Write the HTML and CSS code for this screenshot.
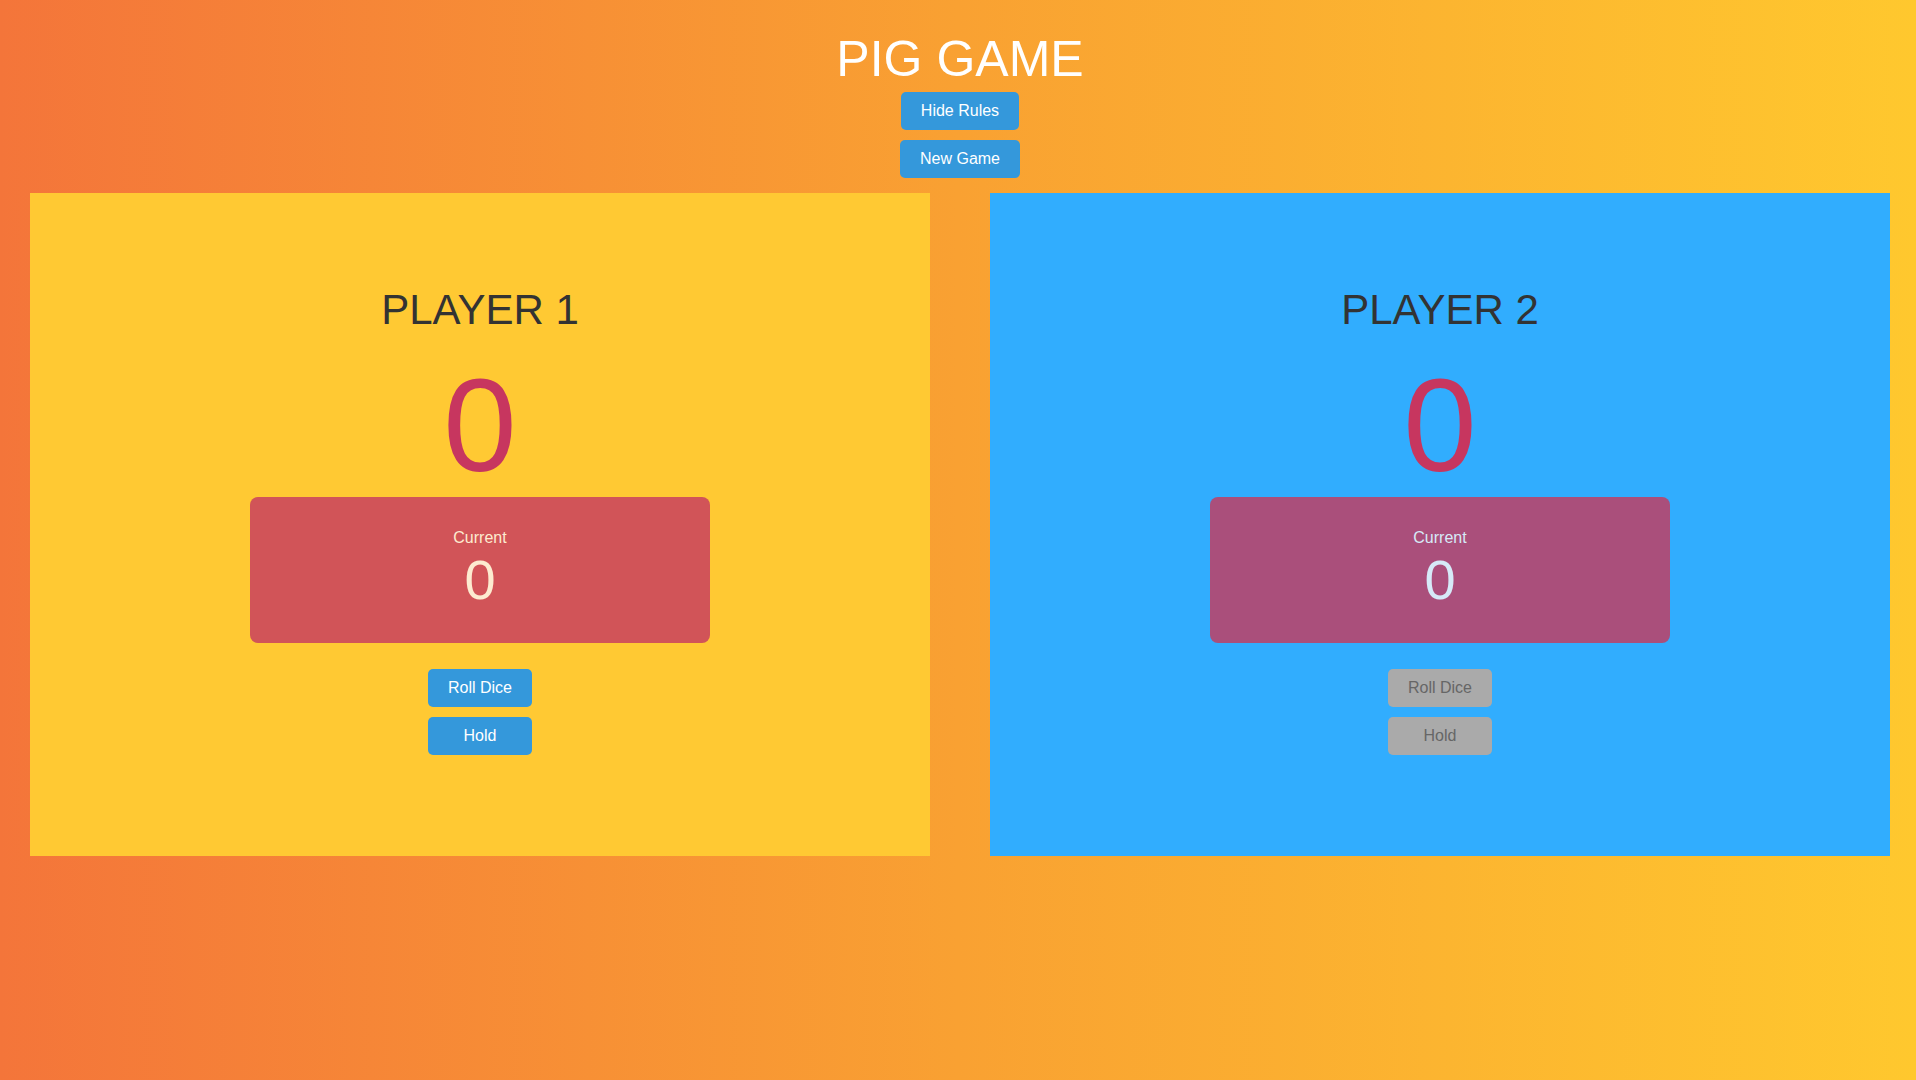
FILE: index.html
```html
<!DOCTYPE html>
<html lang="en">
<head>
<meta charset="utf-8">
<title>Pig Game</title>
<link rel="stylesheet" href="styles.css">
</head>
<body>
<div class="page">
  <header class="header">
    <h1 class="title">PIG GAME</h1>
    <button class="btn">Hide Rules</button>
    <button class="btn">New Game</button>
  </header>
  <main class="board">
    <section class="player player--one">
      <h2 class="player-name">PLAYER 1</h2>
      <div class="score">0</div>
      <div class="current current--one">
        <div class="current-label">Current</div>
        <div class="current-score">0</div>
      </div>
      <div class="actions">
        <button class="btn">Roll Dice</button>
        <button class="btn">Hold</button>
      </div>
    </section>
    <section class="player player--two">
      <h2 class="player-name">PLAYER 2</h2>
      <div class="score">0</div>
      <div class="current current--two">
        <div class="current-label">Current</div>
        <div class="current-score">0</div>
      </div>
      <div class="actions">
        <button class="btn btn--disabled" disabled>Roll Dice</button>
        <button class="btn btn--disabled" disabled>Hold</button>
      </div>
    </section>
  </main>
</div>
</body>
</html>
```
FILE: styles.css
```css
html, body {
  margin: 0;
  height: 100%;
}
body {
  font-family: "Liberation Sans", Arial, sans-serif;
  background: linear-gradient(to right, #f4753a 0%, #f9a132 50%, #ffc82e 100%);
  overflow: hidden;
}
.page {
  margin-left: 4px;
  width: 1912px;
}
.header {
  display: flex;
  flex-direction: column;
  align-items: center;
  gap: 10px;
  padding-top: 32px;
}
.title {
  margin: 0 0 -5px;
  font-size: 50px;
  font-weight: 400;
  line-height: 55px;
  color: #fff;
}
.btn {
  font-family: "Liberation Sans", Arial, sans-serif;
  font-size: 16px;
  line-height: 18px;
  padding: 10px 20px;
  border: none;
  border-radius: 5px;
  background: #3498db;
  color: #fff;
  cursor: pointer;
}
.btn--disabled {
  background: #aaaaaa;
  color: #666;
  cursor: default;
}
.board {
  display: flex;
  gap: 60px;
  padding: 15px 26px 0;
}
.player {
  width: 900px;
  height: 663px;
  box-sizing: border-box;
  padding-top: 94px;
  display: flex;
  flex-direction: column;
  align-items: center;
}
.player--one { background: #ffc933; }
.player--two { background: #31adfe; }
.player-name {
  margin: 0;
  font-size: 42px;
  font-weight: 400;
  line-height: 46px;
  color: #333;
}
.score {
  margin-top: 27px;
  font-size: 132px;
  line-height: 132px;
  color: #c7365f;
}
.current {
  margin-top: 5px;
  width: 460px;
  height: 146px;
  box-sizing: border-box;
  padding-top: 32px;
  border-radius: 8px;
  text-align: center;
}
.current--one { background: #d15458; color: #fdebd0; }
.current--two { background: #aa4f7b; color: #d6eaf8; }
.current-label {
  font-size: 16px;
  line-height: 18px;
}
.current-score {
  margin-top: 1px;
  font-size: 56px;
  line-height: 64px;
}
.actions {
  margin-top: 26px;
  display: flex;
  flex-direction: column;
  gap: 10px;
}
```
